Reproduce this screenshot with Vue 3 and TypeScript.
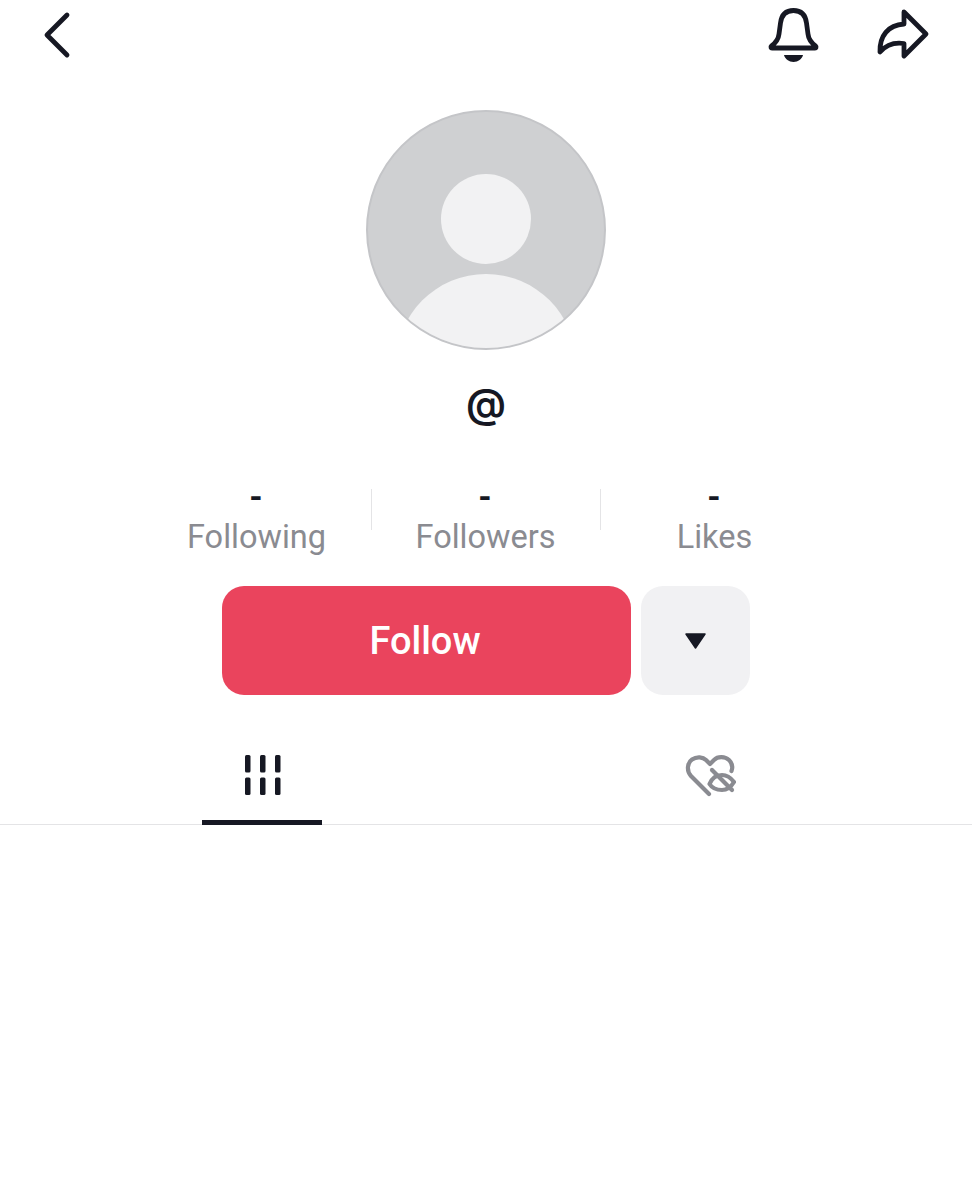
<template>
  <div class="profile">
    <!-- top bar -->
    <header class="topbar">
      <svg class="icon-back" width="30" height="48" viewBox="0 0 30 48" fill="none">
        <path d="M26 4 L6 24 L26 44" stroke="#161823" stroke-width="4.800" stroke-linecap="round" stroke-linejoin="round" />
      </svg>
      <div class="topbar-right">
        <svg width="52" height="58" viewBox="0 0 52 58" fill="none">
          <path d="M3.500 40 C8 36.500 10.500 33 11 28 L12.500 17 C13.500 9 18 4.500 25.500 4.500 C33 4.500 37.500 9 38.500 17 L40 28 C40.500 33 43 36.500 47.500 40 C48.500 41 48 42 47 42 L4 42 C3 42 2.500 41 3.500 40 Z" stroke="#161823" stroke-width="4.800" stroke-linejoin="round" />
          <path d="M16 49 H35 C34 53 30 56 25.500 56 C21 56 17 53 16 49 Z" fill="#161823" />
        </svg>
        <svg class="icon-share" width="54" height="52" viewBox="0 0 54 52" fill="none">
          <path d="M28 4 L50 26 L28 48 V35.500 C18 34 10 37 4 44 C3.500 28 12 17 28 16 Z" stroke="#161823" stroke-width="4.800" stroke-linejoin="round" stroke-linecap="round" />
        </svg>
      </div>
    </header>

    <!-- avatar -->
    <div class="avatar">
      <div class="avatar-head"></div>
      <div class="avatar-body"></div>
    </div>

    <div class="username">@</div>

    <!-- counts -->
    <div class="stats">
      <div v-for="s in stats" :key="s.label" class="stat">
        <span class="stat-value">-</span>
        <span class="stat-label">{{ s.label }}</span>
      </div>
    </div>

    <!-- actions -->
    <div class="actions">
      <button class="follow-btn">Follow</button>
      <button class="more-btn">
        <svg width="24" height="18" viewBox="0 0 24 18">
          <path d="M2 2 H21 L11.500 16 Z" fill="#161823" stroke="#161823" stroke-width="1.500" stroke-linejoin="round" />
        </svg>
      </button>
    </div>

    <!-- tabs -->
    <nav class="tabs">
      <div class="tab active">
        <svg width="38" height="42" viewBox="0 0 38 42" fill="#161823">
          <rect v-for="r in gridBars" :key="r.x + '-' + r.y" :x="r.x" :y="r.y" width="5.500" height="17.500" rx="1.500" />
        </svg>
      </div>
      <div class="tab">
        <svg width="52" height="44" viewBox="0 0 52 44" fill="none" stroke="#8a8b91" stroke-width="4.200" stroke-linecap="round" stroke-linejoin="round">
          <path d="M25 40 L7 22 C2.500 17 3 9 8 5.500 C13 2 19 3 22 6 L26 10 L30 6 C34 2 41 2.500 45 6 C48 9 49 13 47.500 17" />
          <path d="M25.500 30 C28 24 33 21 38 21 C42 21 47 24 50 28 C47 33 42 36 38 36 C33 36 28 34 25.500 30 Z" />
          <path d="M28 16 L48 36" />
        </svg>
      </div>
    </nav>
  </div>
</template>

<script setup lang="ts">
const stats = [{ label: 'Following' }, { label: 'Followers' }, { label: 'Likes' }]

const gridBars = [0, 15, 30].flatMap((x) => [1, 23.5].map((y) => ({ x: x + 2, y })))
</script>

<style>
body {
  background: #fff;
}
</style>

<style scoped>
.profile {
  width: 972px;
  height: 1200px;
  background: #fff;
  color: #161823;
  font-family: Roboto, "Liberation Sans", sans-serif;
  display: flex;
  flex-direction: column;
  align-items: center;
}

.topbar {
  width: 100%;
  box-sizing: border-box;
  height: 110px;
  padding: 6px 42px 0 41px;
  display: flex;
  justify-content: space-between;
  align-items: flex-start;
}

.icon-back {
  margin-top: 5px;
}

.topbar-right {
  display: flex;
  align-items: flex-start;
  gap: 56px;
}

.icon-share {
  margin-top: 2px;
}

.avatar {
  width: 240px;
  height: 240px;
  box-sizing: border-box;
  border-radius: 50%;
  border: 2px solid #c4c5c8;
  background: #cfd0d2;
  position: relative;
  overflow: hidden;
}

.avatar-head {
  position: absolute;
  left: 73px;
  top: 62px;
  width: 90px;
  height: 90px;
  border-radius: 50%;
  background: #f2f2f3;
}

.avatar-body {
  position: absolute;
  left: 28px;
  top: 162px;
  width: 180px;
  height: 180px;
  border-radius: 50%;
  background: #f2f2f3;
}

.username {
  margin-top: 26px;
  font-size: 40px;
  line-height: 56px;
  font-weight: 600;
  font-family: Inter, sans-serif;
}

.stats {
  margin-top: 48px;
  margin-right: 2px;
  display: flex;
}

.stat {
  width: 229px;
  display: flex;
  flex-direction: column;
  align-items: center;
  position: relative;
}

.stat + .stat::before {
  content: "";
  position: absolute;
  left: 0;
  top: 9px;
  height: 41px;
  width: 1px;
  background: #e4e4e6;
}

.stat-value {
  font-size: 34px;
  line-height: 32px;
  font-weight: 700;
}

.stat-label {
  margin: 4px 0 0 1px;
  font-size: 32.500px;
  line-height: 42px;
  color: #8a8b91;
}

.actions {
  margin-top: 28px;
  display: flex;
  gap: 10px;
}

.follow-btn {
  width: 409px;
  height: 109px;
  padding: 0 3px 0 0;
  border: none;
  border-radius: 22px;
  background: #ea445d;
  color: #fff;
  font-family: inherit;
  font-size: 38px;
  font-weight: 500;
}

.more-btn {
  width: 109px;
  height: 109px;
  border: none;
  border-radius: 22px;
  background: #f1f1f3;
  display: flex;
  align-items: center;
  justify-content: center;
}

.tabs {
  margin-top: 58px;
  width: 100%;
  box-sizing: border-box;
  padding: 0 38px;
  height: 72px;
  display: grid;
  grid-template-columns: 1fr 1fr;
  border-bottom: 1px solid #e4e4e6;
}

.tab {
  position: relative;
  display: flex;
  justify-content: center;
  padding-top: 1px;
}

.tab.active::after {
  content: "";
  position: absolute;
  bottom: -1px;
  left: calc(50% - 60px);
  width: 120px;
  height: 5px;
  background: #161823;
}
</style>
